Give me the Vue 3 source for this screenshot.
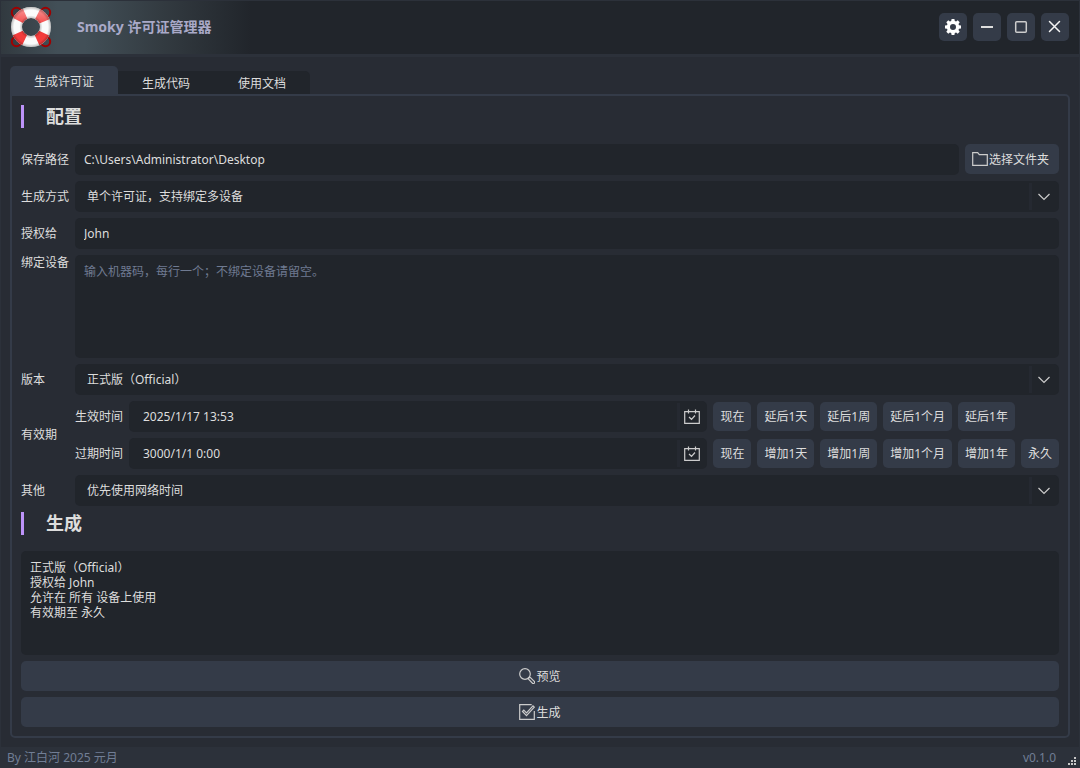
<script setup>
import { ref } from 'vue'

const tabs = ['生成许可证', '生成代码', '使用文档']
const active = ref(0)
const path = ref('C:\\Users\\Administrator\\Desktop')
const licensee = ref('John')
const devices = ref('')
const start = ref('2025/1/17 13:53')
const end = ref('3000/1/1 0:00')
const preview = ref('正式版（Official）\n授权给 John\n允许在 所有 设备上使用\n有效期至 永久')
const startSteps = ['现在', '延后1天', '延后1周', '延后1个月', '延后1年']
const endSteps = ['现在', '增加1天', '增加1周', '增加1个月', '增加1年', '永久']
</script>

<template>
  <div class="window">
    <header class="titlebar">
      <svg class="logo" viewBox="0 0 42 42" aria-hidden="true">
        <defs>
          <radialGradient id="ringShade" gradientUnits="userSpaceOnUse" cx="21" cy="21" r="20">
            <stop offset="45%" stop-color="#000" stop-opacity=".22" />
            <stop offset="58%" stop-color="#000" stop-opacity="0" />
            <stop offset="85%" stop-color="#000" stop-opacity="0" />
            <stop offset="100%" stop-color="#000" stop-opacity=".25" />
          </radialGradient>
          <linearGradient id="ringGloss" x1="0" y1="0" x2="0" y2="1">
            <stop offset="0" stop-color="#fff" stop-opacity=".35" />
            <stop offset="50%" stop-color="#fff" stop-opacity="0" />
          </linearGradient>
        </defs>
        <g fill="none" stroke="#a00000" stroke-width="2">
          <circle cx="6.500" cy="6.500" r="4.700" />
          <circle cx="35.500" cy="6.500" r="4.700" />
          <circle cx="6.500" cy="35.500" r="4.700" />
          <circle cx="35.500" cy="35.500" r="4.700" />
        </g>
        <circle cx="21" cy="21" r="14.500" fill="none" stroke="#fafafa" stroke-width="11" />
        <circle cx="21" cy="21" r="14.500" fill="none" stroke="#f33c3c" stroke-width="11" stroke-dasharray="10 12.777" stroke-dashoffset="-6.400" />
        <circle cx="21" cy="21" r="14.500" fill="none" stroke="url(#ringGloss)" stroke-width="11" />
        <circle cx="21" cy="21" r="14.500" fill="none" stroke="url(#ringShade)" stroke-width="11" />
      </svg>
      <h1>Smoky 许可证管理器</h1>
      <div class="controls">
        <button type="button" aria-label="设置">
          <svg viewBox="0 0 16 16"><path fill="#fff" fill-rule="evenodd" d="M6.600 0h2.800l.4 2 1.300.5L12.700 1.300l2 2-1.200 1.600.5 1.300 2 .4v2.800l-2 .4-.5 1.300 1.200 1.600-2 2-1.600-1.200-1.300.5-.4 2H6.600l-.4-2-1.300-.5-1.600 1.200-2-2 1.200-1.600-.5-1.300-2-.4V6.600l2-.4.5-1.300L1.300 3.300l2-2 1.600 1.200L6.200 2zM8 5a3 3 0 1 0 0 6 3 3 0 0 0 0-6z" /></svg>
        </button>
        <button type="button" aria-label="最小化">
          <svg viewBox="0 0 16 16"><path d="M2 8h12" stroke="#ddd" stroke-width="2" /></svg>
        </button>
        <button type="button" aria-label="最大化">
          <svg viewBox="0 0 16 16"><rect x="2.700" y="2.700" width="10.600" height="10.600" rx="1" fill="none" stroke="#ccc" stroke-width="1.500" /></svg>
        </button>
        <button type="button" aria-label="关闭">
          <svg viewBox="0 0 16 16"><path d="M2.500 2.500l10 10M12.500 2.500l-10 10" stroke="#f4f4f4" stroke-width="1.500" stroke-linecap="round" /></svg>
        </button>
      </div>
    </header>

    <main class="body">
      <div class="tabs" role="tablist">
        <button v-for="(t, i) in tabs" :key="t" type="button" role="tab" :aria-selected="active === i" :class="{ active: active === i }" @click="active = i">{{ t }}</button>
      </div>

      <section class="panel">
        <h2>配置</h2>
        <div class="form">
          <label for="path">保存路径</label>
          <div class="line">
            <input id="path" v-model="path" class="field grow" type="text" />
            <button type="button" class="btn folder">
              <svg viewBox="0 0 16 16"><path d="M.7 14.300V1.700h5l1.600 2h8v10.600z" /></svg><span>选择文件夹</span>
            </button>
          </div>

          <label for="mode">生成方式</label>
          <div class="combo">
            <select id="mode" class="field"><option>单个许可证，支持绑定多设备</option></select>
            <span class="drop"><svg viewBox="0 0 16 16"><path d="M2.500 5L8 10.500 13.500 5" /></svg></span>
          </div>

          <label for="licensee">授权给</label>
          <input id="licensee" v-model="licensee" class="field" type="text" />

          <label for="devices" class="top">绑定设备</label>
          <textarea id="devices" v-model="devices" class="field" placeholder="输入机器码，每行一个；不绑定设备请留空。"></textarea>

          <label for="edition">版本</label>
          <div class="combo">
            <select id="edition" class="field"><option>正式版（Official）</option></select>
            <span class="drop"><svg viewBox="0 0 16 16"><path d="M2.500 5L8 10.500 13.500 5" /></svg></span>
          </div>

          <span class="caption">有效期</span>
          <div class="period">
            <label for="start">生效时间</label>
            <div class="date">
              <input id="start" v-model="start" class="field" type="text" />
              <button type="button" class="drop" aria-label="选择生效时间"><svg viewBox="0 0 16 16"><path d="M.7 2.700h14.600v11.600H.7zM4.500 .5v4M11.500 .5v4M5 8l2.500 2.300L11 6.500" /></svg></button>
            </div>
            <div class="steps">
              <button v-for="s in startSteps" :key="s" type="button" class="btn">{{ s }}</button>
            </div>
            <label for="end">过期时间</label>
            <div class="date">
              <input id="end" v-model="end" class="field" type="text" />
              <button type="button" class="drop" aria-label="选择过期时间"><svg viewBox="0 0 16 16"><path d="M.7 2.700h14.600v11.600H.7zM4.500 .5v4M11.500 .5v4M5 8l2.500 2.300L11 6.500" /></svg></button>
            </div>
            <div class="steps">
              <button v-for="s in endSteps" :key="s" type="button" class="btn">{{ s }}</button>
            </div>
          </div>

          <label for="other">其他</label>
          <div class="combo">
            <select id="other" class="field"><option>优先使用网络时间</option></select>
            <span class="drop"><svg viewBox="0 0 16 16"><path d="M2.500 5L8 10.500 13.500 5" /></svg></span>
          </div>
        </div>

        <h2>生成</h2>
        <textarea v-model="preview" class="field result" aria-label="许可证预览"></textarea>
        <button type="button" class="btn wide">
          <svg viewBox="0 0 16 16"><circle cx="6" cy="6" r="5.300" /><path d="M10 9.500l1.200-.2 4 4a1.200 1.200 0 0 1-1.700 1.900l-4-4z" /></svg><span>预览</span>
        </button>
        <button type="button" class="btn wide">
          <svg viewBox="0 0 16 16"><path d="M15.300 7v8.300H.7V.7h12M3.500 7.500l1.300-1.300 2.700 2.700 6.500-7 1.300 1.300-7.800 8.500z" /></svg><span>生成</span>
        </button>
      </section>
    </main>

    <footer class="status">
      <span>By 江白河 2025 元月</span>
      <span class="version">v0.1.0</span>
      <svg class="grip" viewBox="0 0 8 8" aria-hidden="true"><path d="M6 0h2v2H6zM3 3h2v2H3zM6 3h2v2H6zM0 6h2v2H0zM3 6h2v2H3zM6 6h2v2H6z" /></svg>
    </footer>
  </div>
</template>

<style>
body {
  background: #282c34;
}
</style>

<style scoped>
.window {
  display: flex;
  flex-direction: column;
  box-sizing: border-box;
  min-height: 100vh;
  border: 1px solid #2c313a;
  border-bottom: 0;
  background: #282c34;
  color: #ddd;
  font: 12px/16px "Noto Sans", "Noto Sans CJK SC", sans-serif;
}
button, input, select, textarea {
  box-sizing: border-box;
  margin: 0;
  border: 0;
  font: inherit;
  color: inherit;
  outline: none;
}
button {
  cursor: pointer;
}
svg {
  display: block;
  flex: none;
  width: 16px;
  height: 16px;
}
.titlebar {
  display: flex;
  align-items: center;
  height: 52px;
  padding: 0 10px 1px 9px;
  border-bottom: 3px solid #2c313a;
  background: #21252b linear-gradient(90deg, #31393f 0, #424f57 56px, #424f57 84px, #333b41 160px, #21252b 250px) no-repeat;
}
.logo {
  width: 42px;
  height: 42px;
}
h1 {
  flex: 1;
  margin: 0 0 0 25px;
  font-size: 14px;
  line-height: 20px;
  font-weight: 700;
  color: #a9a9c8;
}
.controls {
  display: flex;
  gap: 6px;
}
.controls button {
  display: grid;
  place-items: center;
  width: 28px;
  height: 28px;
  padding: 0;
  border-radius: 5px;
  background: #343b48;
}
.body {
  display: flex;
  flex: 1;
  flex-direction: column;
  padding: 9px 9px;
}
.tabs {
  display: flex;
  align-items: flex-end;
}
.tabs button {
  height: 23px;
  padding: 3px 24px 0;
  background: #21252b;
}
.tabs button:last-child {
  border-top-right-radius: 5px;
}
.tabs .active {
  height: 28px;
  border-radius: 5px 5px 0 0;
  background: #343b48;
}
.panel {
  display: flex;
  flex: 1;
  flex-direction: column;
  gap: 6px;
  padding: 9px;
  border: 2px solid #343b48;
  border-radius: 0 5px 5px 5px;
}
h2 {
  margin: 0 0 10px;
  padding-left: 22px;
  border-left: 3px solid #bd93f9;
  font-size: 18px;
  line-height: 23px;
  font-weight: 700;
}
.form {
  display: grid;
  grid-template-columns: 48px 1fr;
  align-items: center;
  gap: 6px;
}
.form label {
  white-space: nowrap;
}
.top {
  align-self: start;
}
.line, .steps {
  display: flex;
  gap: 6px;
}
.field {
  display: block;
  width: 100%;
  min-width: 0;
  height: 31px;
  padding: 0 9px;
  border-radius: 5px;
  background: #21252b;
}
.grow {
  flex: 1;
}
textarea.field {
  height: 103px;
  padding: 9px;
  line-height: 15px;
  resize: none;
}
textarea.result {
  flex: 1;
  min-height: 103px;
}
textarea::placeholder {
  color: #6f7a91;
  opacity: 1;
}
select.field {
  appearance: none;
  padding: 0 30px 0 12px;
}
.combo, .date {
  position: relative;
}
.date .field {
  padding: 0 30px 0 14px;
}
.drop {
  position: absolute;
  top: 2px;
  right: 0;
  bottom: 2px;
  display: grid;
  place-items: center;
  box-sizing: border-box;
  width: 30px;
  padding: 0 4px 0 0;
  border-left: 3px solid #252931;
  background: none;
  pointer-events: none;
}
button.drop {
  pointer-events: auto;
}
.drop svg, .btn svg {
  fill: none;
  stroke: #ccc;
  stroke-width: 1.2;
}
.period {
  display: grid;
  grid-template-columns: 48px 1fr auto;
  align-items: center;
  gap: 6px;
}
.btn {
  height: 29px;
  padding: 0 7px;
  border-radius: 5px;
  background: #343b48;
  white-space: nowrap;
}
.folder, .wide {
  display: flex;
  align-items: center;
  justify-content: center;
  gap: 1px;
  height: 30px;
}
.folder {
  padding: 0 10px 0 7px;
}
.btn span {
  padding-top: 2px;
}
.status {
  display: flex;
  align-items: center;
  height: 21px;
  padding: 0 3px 0 6px;
  background: #2c313a;
  color: #717e95;
}
.version {
  flex: 1;
  text-align: right;
}
.grip {
  align-self: flex-end;
  width: 8px;
  height: 8px;
  margin: 0 0 3px 12px;
  fill: #c8c8c8;
}
</style>
